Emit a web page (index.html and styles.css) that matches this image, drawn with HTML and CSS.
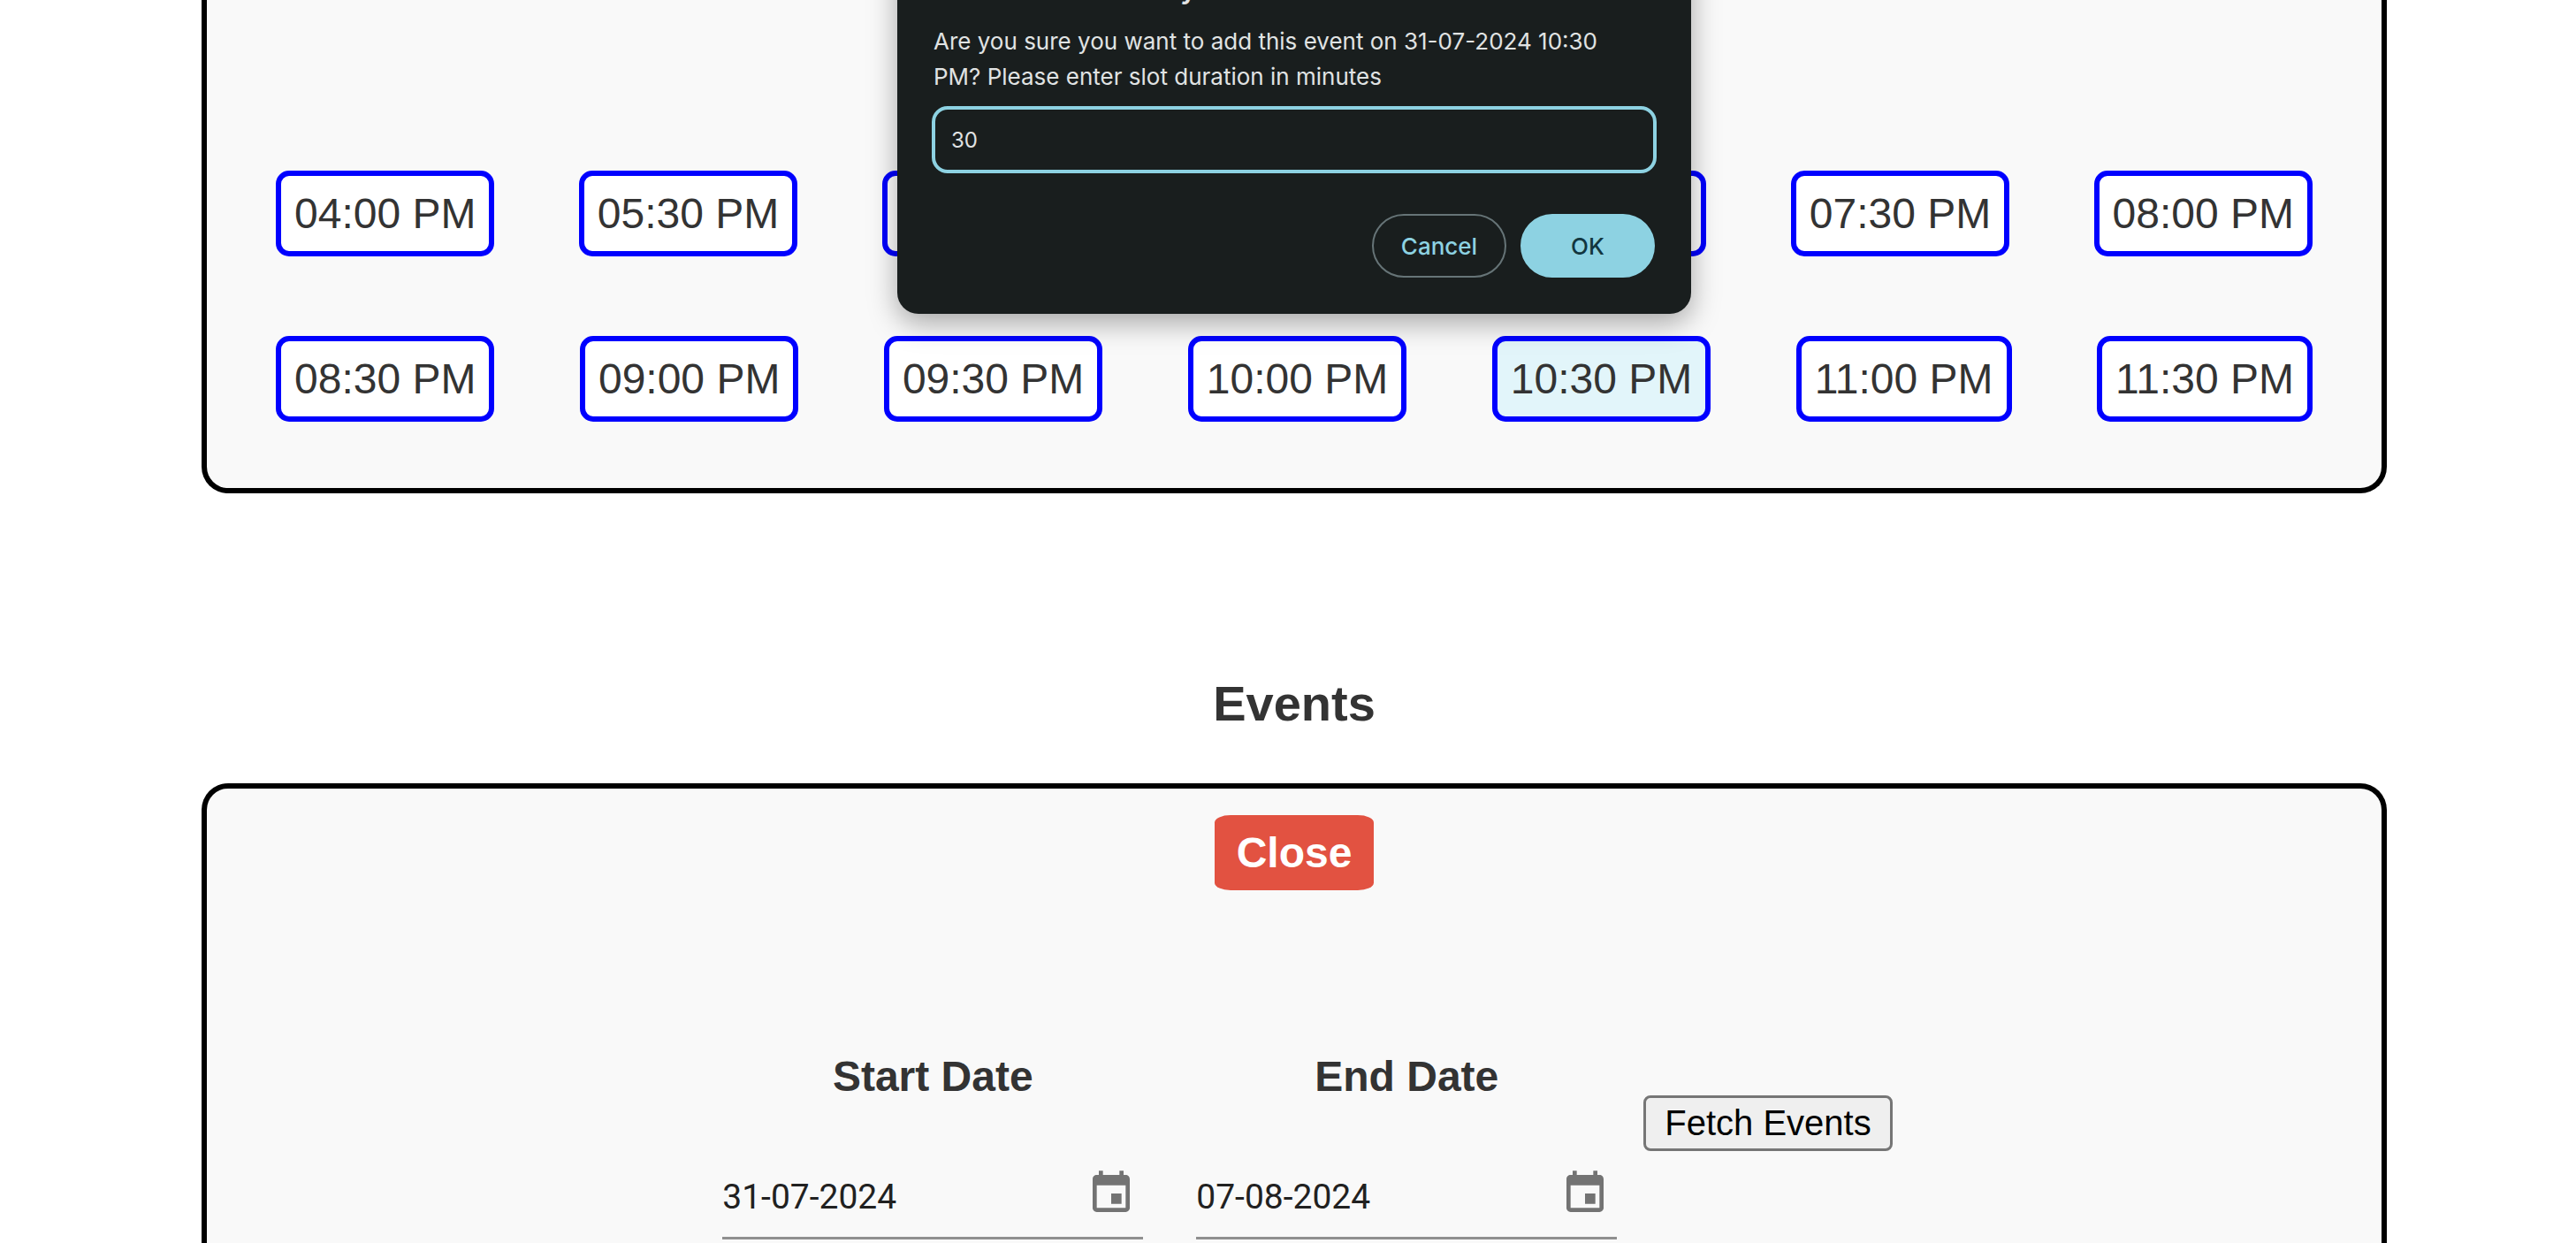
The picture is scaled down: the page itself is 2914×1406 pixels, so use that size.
FILE: index.html
```html
<!DOCTYPE html>
<html lang="en">
<head>
  <meta charset="utf-8">
  <meta name="viewport" content="width=device-width, initial-scale=1">
  <title>Calendar slots</title>
  <link rel="stylesheet" href="styles.css">
</head>
<body>
  <main class="page">
    <section class="panel panel-slots" aria-label="Available slots">
      <div class="slot-row">
        <button type="button" class="slot">04:00 PM</button>
        <button type="button" class="slot">05:30 PM</button>
        <button type="button" class="slot">06:00 PM</button>
        <button type="button" class="slot">06:30 PM</button>
        <button type="button" class="slot">07:00 PM</button>
        <button type="button" class="slot">07:30 PM</button>
        <button type="button" class="slot">08:00 PM</button>
      </div>
      <div class="slot-row">
        <button type="button" class="slot">08:30 PM</button>
        <button type="button" class="slot">09:00 PM</button>
        <button type="button" class="slot">09:30 PM</button>
        <button type="button" class="slot">10:00 PM</button>
        <button type="button" class="slot slot-selected">10:30 PM</button>
        <button type="button" class="slot">11:00 PM</button>
        <button type="button" class="slot">11:30 PM</button>
      </div>
    </section>

    <h2 class="section-title">Events</h2>

    <section class="panel panel-events" aria-label="Events">
      <button type="button" class="close-button">Close</button>
      <form class="filters">
        <div class="date-field">
          <label class="date-label" for="start-date">Start Date</label>
          <div class="date-control">
            <input class="date-input" id="start-date" type="text" value="31-07-2024">
            <button type="button" class="icon-button" aria-label="Choose start date">
              <svg class="icon" viewBox="0 0 24 24" aria-hidden="true"><path d="M17 12h-5v5h5v-5zM16 1v2H8V1H6v2H5c-1.11 0-1.99.9-1.99 2L3 19c0 1.1.89 2 2 2h14c1.1 0 2-.9 2-2V5c0-1.1-.9-2-2-2h-1V1h-2zm3 18H5V8h14v11z"/></svg>
            </button>
          </div>
        </div>
        <div class="date-field">
          <label class="date-label" for="end-date">End Date</label>
          <div class="date-control">
            <input class="date-input" id="end-date" type="text" value="07-08-2024">
            <button type="button" class="icon-button" aria-label="Choose end date">
              <svg class="icon" viewBox="0 0 24 24" aria-hidden="true"><path d="M17 12h-5v5h5v-5zM16 1v2H8V1H6v2H5c-1.11 0-1.99.9-1.99 2L3 19c0 1.1.89 2 2 2h14c1.1 0 2-.9 2-2V5c0-1.1-.9-2-2-2h-1V1h-2zm3 18H5V8h14v11z"/></svg>
            </button>
          </div>
        </div>
        <button type="button" class="fetch-button">Fetch Events</button>
      </form>
    </section>

    <dialog class="prompt" open aria-labelledby="prompt-title">
      <h1 class="prompt-title" id="prompt-title">localhost:3000 says</h1>
      <label class="prompt-message" for="duration">Are you sure you want to add this event on 31-07-2024 10:30 PM? Please enter slot duration in minutes</label>
      <input class="prompt-input" id="duration" type="text" value="30">
      <div class="prompt-actions">
        <button type="button" class="prompt-button prompt-cancel">Cancel</button>
        <button type="button" class="prompt-button prompt-ok">OK</button>
      </div>
    </dialog>
  </main>
</body>
</html>
```
FILE: styles.css
```css
* {
  box-sizing: border-box;
}

body {
  margin: 0 0 0 14px;
  background: #fff;
  color: #333;
  font-family: "Liberation Sans", Arial, sans-serif;
  font-size: 48px;
}

.page {
  position: relative;
  padding: 0 214px;
  overflow: hidden;
}

.panel {
  border: 6px solid #000;
  background: #f9f9f9;
}

.panel-slots {
  display: flex;
  flex-direction: column;
  gap: 90px;
  padding: 193px 78px 75px;
  border-top: 0;
  border-radius: 0 0 30px 30px;
}

.slot-row {
  display: flex;
  justify-content: space-between;
}

.slot {
  padding: 15px;
  border: 6px solid #00f;
  border-radius: 15px;
  background: #fff;
  color: inherit;
  font: inherit;
  line-height: 55px;
  white-space: nowrap;
}

.slot-selected {
  background: #e2f5fa;
}

.section-title {
  margin: 206px 0 58px;
  font-size: 56px;
  line-height: 64px;
  text-align: center;
}

.panel-events {
  display: flex;
  flex-direction: column;
  align-items: center;
  padding: 30px 30px 4px;
  border-bottom: 0;
  border-radius: 30px 30px 0 0;
}

.close-button {
  padding: 15px 25px;
  border: 0;
  border-radius: 10%;
  background: #e25241;
  color: #fff;
  font: inherit;
  font-weight: bold;
  line-height: 55px;
}

.filters {
  display: flex;
  align-items: center;
  justify-content: center;
  margin-top: 132px;
}

.date-field {
  display: flex;
  flex-direction: column;
  align-items: center;
  width: 476px;
  margin: 0 30px;
}

.date-label {
  margin: 51px 0 56px;
  font-weight: bold;
  line-height: 55px;
}

.date-control {
  display: flex;
  align-items: center;
  width: 100%;
  padding-right: 8px;
  border-bottom: 3px solid #909090;
}

.date-input {
  flex: 1;
  min-width: 0;
  height: 98px;
  padding: 8px 0 0;
  border: 0;
  background: none;
  color: #212121;
  font-family: Roboto, sans-serif;
  font-size: 39px;
}

.icon-button {
  display: flex;
  padding: 0;
  border: 0;
  background: none;
  color: #737373;
}

.icon {
  width: 56px;
  height: 56px;
  fill: currentColor;
}

.fetch-button {
  padding: 5px 21px 6px;
  border: 3px solid #767676;
  border-radius: 8px;
  background: #efefef;
  color: #000;
  font: inherit;
  font-size: 40px;
  line-height: 46px;
}

.prompt {
  position: absolute;
  top: -73px;
  left: 50%;
  transform: translateX(-50%);
  display: flex;
  flex-direction: column;
  width: 898px;
  margin: 0;
  padding: 40px 39px 41px;
  border: 0;
  border-radius: 24px;
  background: #191e1e;
  color: #e0e3e3;
  font-family: Inter, sans-serif;
  font-size: 26px;
  line-height: 40px;
  box-shadow: 0 10px 32px rgba(0, 0, 0, 0.34);
}

.prompt-title {
  margin: 0 0 20px;
  padding-left: 2px;
  font-size: 32px;
  font-weight: 600;
}

.prompt-message {
  max-width: 780px;
  margin-bottom: 13px;
  padding-left: 2px;
}

.prompt-input {
  height: 76px;
  padding: 0 18px;
  border: 4px solid #8dd2e2;
  border-radius: 18px;
  outline: 0;
  background: transparent;
  color: inherit;
  font: inherit;
  font-size: 24px;
}

.prompt-actions {
  display: flex;
  justify-content: flex-end;
  gap: 16px;
  margin-top: 46px;
  padding-right: 2px;
}

.prompt-button {
  width: 152px;
  height: 72px;
  padding: 2px 0 0;
  border: 2px solid #8dd2e2;
  border-radius: 36px;
  font: inherit;
  font-weight: 500;
}

.prompt-cancel {
  border-color: #667477;
  background: transparent;
  color: #8dd2e2;
}

.prompt-ok {
  background: #8dd2e2;
  color: #12363f;
}
```
